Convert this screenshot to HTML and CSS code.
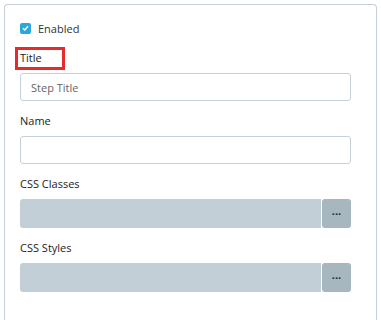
FILE: index.html
```html
<!doctype html>
<html lang="en">
<head>
<meta charset="UTF-8">
<title>Step</title>
<link rel="stylesheet" href="styles.css">
</head>
<body>
	<div class="card">
		<div class="check-row">
			<span class="check">
				<svg width="7" height="6" viewBox="0 0 7 6"><path d="M1 3.2 L2.8 5 L6 1.2" fill="none" stroke="#fff" stroke-width="1.4"/></svg>
			</span>
			<span class="check-label">Enabled</span>
		</div>
		<div class="group">
			<label class="lbl lbl-mark">Title</label>
			<input class="field" type="text" placeholder="Step Title">
		</div>
		<div class="group">
			<label class="lbl">Name</label>
			<input class="field" type="text">
		</div>
		<div class="group">
			<label class="lbl">CSS Classes</label>
			<div class="picker">
				<div class="picker-box"></div>
				<div class="picker-btn">...</div>
			</div>
		</div>
		<div class="group">
			<label class="lbl">CSS Styles</label>
			<div class="picker">
				<div class="picker-box"></div>
				<div class="picker-btn">...</div>
			</div>
		</div>
	</div>
</body>
</html>
```

FILE: styles.css
```css
* {margin:0;padding:0;box-sizing:border-box;}
body{font-size:11px;font-family:"Open Sans","Noto Sans",sans-serif;color:#222;background:#fff;overflow:hidden;}
.card{margin:4px 4px 0 4px;border:1px solid #c5d1d8;border-bottom:none;border-radius:4px 4px 0 0;padding:15px 25px 0 15px;height:330px;}
.check-row{display:flex;align-items:center;gap:7px;height:16px;margin-bottom:14px;}
.check{width:11px;height:11px;border-radius:2px;background:#2ba6de;display:flex;align-items:center;justify-content:center;}
.check-label{color:#333;}
.group{margin-bottom:12px;}
.lbl{display:block;line-height:16px;margin-bottom:7px;color:#222;}
.lbl-mark{width:fit-content;padding:0 20px 1px 2px;margin:0 0 6px -2px;outline:3px solid #e52b2b;}
.field{display:block;width:100%;height:28px;border:1px solid #c5d1d8;border-radius:3px;padding:0 10px;font:inherit;color:#333;background:#fff;}
.field::placeholder{color:#666;}
.picker{display:flex;gap:1px;height:29px;}
.picker-box{flex:1;background:#c3cfd6;border-radius:3px 0 0 3px;}
.picker-btn{width:29px;background:#a6b7c0;border-radius:3px;text-align:center;line-height:24px;font-weight:bold;color:#1a2a35;font-size:11px;}
```
